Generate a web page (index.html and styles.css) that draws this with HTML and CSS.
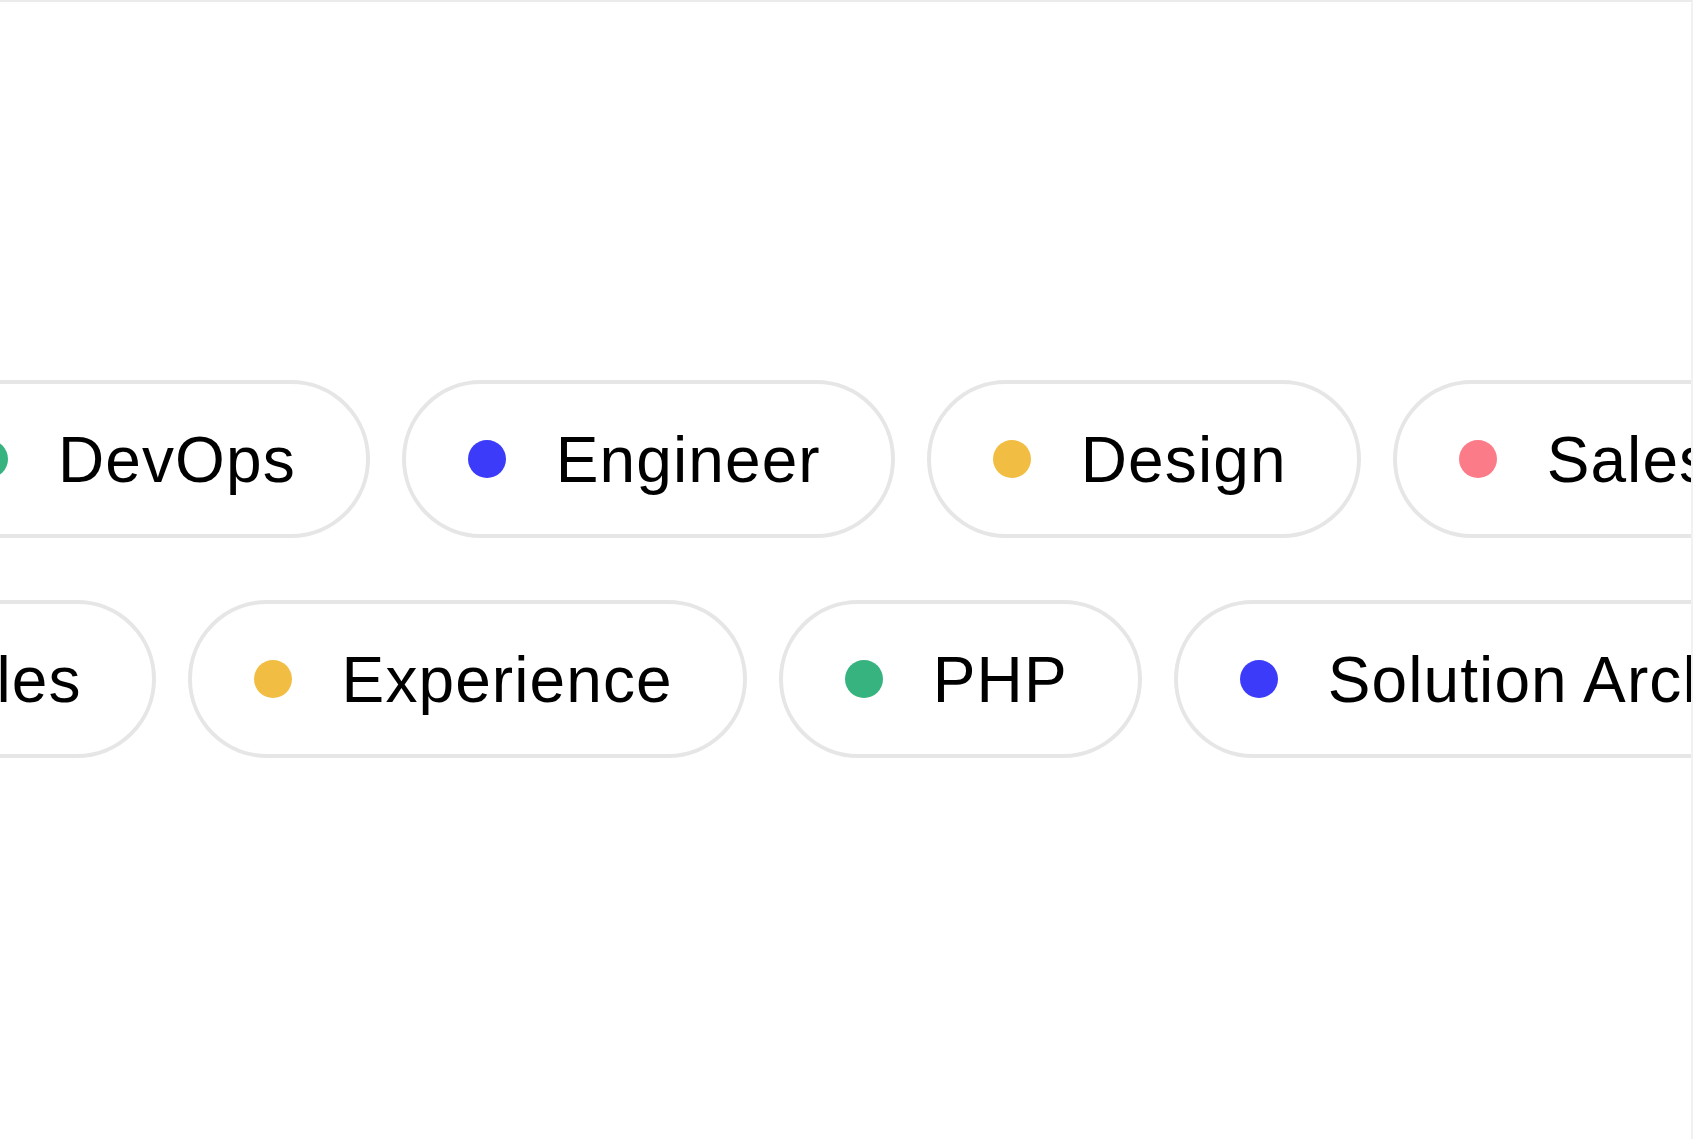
FILE: index.html
```html
<!DOCTYPE html>
<html lang="en">
<head>
<meta charset="utf-8">
<title>Tags</title>
<link rel="stylesheet" href="styles.css">
</head>
<body>
<main class="frame">
  <div class="rows">
    <div class="row row-1">
      <div class="pill"><span class="dot green"></span><span class="label">DevOps</span></div>
      <div class="pill"><span class="dot blue"></span><span class="label">Engineer</span></div>
      <div class="pill"><span class="dot yellow"></span><span class="label">Design</span></div>
      <div class="pill"><span class="dot pink"></span><span class="label">Sales</span></div>
    </div>
    <div class="row row-2">
      <div class="pill"><span class="dot pink"></span><span class="label">Sales</span></div>
      <div class="pill"><span class="dot yellow"></span><span class="label">Experience</span></div>
      <div class="pill"><span class="dot green"></span><span class="label">PHP</span></div>
      <div class="pill"><span class="dot blue"></span><span class="label">Solution Architect</span></div>
    </div>
  </div>
</main>
</body>
</html>
```
FILE: styles.css
```css
html, body {
  margin: 0;
  padding: 0;
  background: #ffffff;
}

body {
  font-family: "Liberation Sans", Arial, sans-serif;
  color: #000000;
}

.frame {
  box-sizing: border-box;
  width: 1693px;
  height: 1139px;
  border-top: 2px solid #ebebeb;
  border-right: 2px solid #f1f1f1;
  overflow: hidden;
  padding-top: 378px;
}

.rows {
  display: flex;
  flex-direction: column;
  gap: 62px;
}

.row {
  display: flex;
  flex-wrap: nowrap;
  gap: 32px;
}

.row-1 {
  margin-left: -96px;
}

.row-2 {
  margin-left: -238px;
}

.pill {
  flex: 0 0 auto;
  box-sizing: border-box;
  height: 158px;
  border: 4px solid #e6e6e6;
  border-radius: 79px;
  display: flex;
  align-items: center;
  padding: 0 70px 0 62px;
  gap: 50px;
  white-space: nowrap;
}

.dot {
  flex: 0 0 auto;
  width: 38px;
  height: 38px;
  border-radius: 50%;
}

.green { background: #36b37e; }
.blue { background: #3b3bf9; }
.yellow { background: #f1be43; }
.pink { background: #fc7b89; }

.label {
  font-size: 64px;
  line-height: 1;
  letter-spacing: 1.1px;
  position: relative;
  top: 1px;
}
```
